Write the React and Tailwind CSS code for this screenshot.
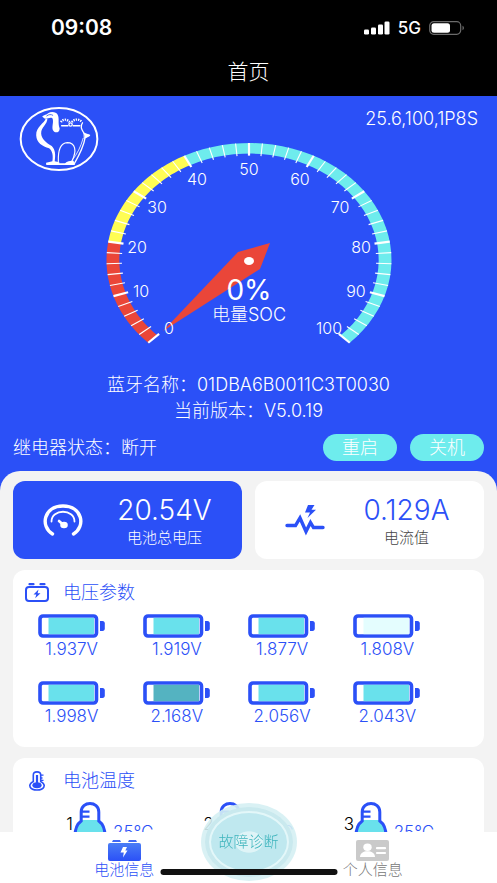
import React from "react";
import clsx from "clsx";

const CELLS = [
  { voltage: "1.937V", fill: "#69e1ec" },
  { voltage: "1.919V", fill: "#69e1ec" },
  { voltage: "1.877V", fill: "#69e1ec" },
  { voltage: "1.808V", fill: "#e4fdfe" },
  { voltage: "1.998V", fill: "#69e1ec" },
  { voltage: "2.168V", fill: "#54b3c1" },
  { voltage: "2.056V", fill: "#69e1ec" },
  { voltage: "2.043V", fill: "#69e1ec" },
];

const TEMPERATURES = [
  { id: 1, value: "25℃" },
  { id: 2, value: "25℃" },
  { id: 3, value: "25℃" },
];

// Gauge geometry: 0 sits at 225deg and 100 at -45deg
const CX = 150;
const CY = 120;
const RX = 142.5;
const RY = 117;

const pointAt = (value, k) => {
  const angle = ((225 - value * 2.7) * Math.PI) / 180;
  return [CX + RX * k * Math.cos(angle), CY - RY * k * Math.sin(angle)];
};

const bandPath = (from, to) => {
  const steps = 40;
  const outer = [];
  const inner = [];
  for (let i = 0; i <= steps; i++) {
    const v = from + ((to - from) * i) / steps;
    outer.push(pointAt(v, 1).join(","));
    inner.unshift(pointAt(v, 0.91).join(","));
  }
  return `M${outer.join("L")}L${inner.join("L")}Z`;
};

const GAUGE_LABELS = [
  [0, 70, 188],
  [10, 42, 151],
  [20, 38, 107],
  [30, 58, 67],
  [40, 98, 39],
  [50, 150, 29],
  [60, 201, 39],
  [70, 241, 67],
  [80, 262, 107],
  [90, 257, 151],
  [100, 230, 188],
];

const Gauge = () => (
  <svg
    viewBox="0 0 300 212"
    className="w-[300px] h-[212px] -mt-8 mx-auto"
    fill="#fff"
    textAnchor="middle"
    role="img"
    aria-label="电量SOC"
  >
    <path d={bandPath(0, 20)} fill="#ea4639" />
    <path d={bandPath(20, 40)} fill="#fffd54" />
    <path d={bandPath(40, 100)} fill="#6eeced" />
    {Array.from({ length: 51 }, (_, i) => {
      const [x1, y1] = pointAt(i * 2, 1);
      const [x2, y2] = pointAt(i * 2, 0.892);
      return (
        <line
          key={i}
          x1={x1}
          y1={y1}
          x2={x2}
          y2={y2}
          stroke="#fff"
          strokeWidth={i % 5 === 0 ? 2.2 : 1.1}
        />
      );
    })}
    <path d="M64 191L139 112L171 103L161 129Z" fill="#ea4639" />
    <ellipse cx="150" cy="121" rx="5" ry="4" />
    {GAUGE_LABELS.map(([label, x, y]) => (
      <text key={label} x={x} y={y + 6} fontSize="16">
        {label}
      </text>
    ))}
    <text x="150" y="160" fontSize="28" className="font-normal">
      0%
    </text>
    <text x="150" y="181" fontSize="18">
      电量SOC
    </text>
  </svg>
);

const CamelLogo = () => (
  <svg
    viewBox="26 16 242 198"
    className="w-[80px] h-[66px]"
    fill="none"
    stroke="#fff"
    strokeLinecap="round"
    strokeLinejoin="round"
    role="img"
    aria-label="logo"
  >
    <ellipse cx="147" cy="115" rx="116" ry="94" strokeWidth="6" />
    {/* head and ear */}
    <path
      d="M96 47C102 41 110 42 114 37C124 31 139 33 143 42C149 54 143 66 149 83C149 98 132 98 128 87C125 74 132 63 127 52C119 48 112 55 103 53Z"
      fill="#fff"
      stroke="none"
    />
    <path d="M110 45C116 40 123 40 128 43" stroke="#2b50f7" strokeWidth="2.5" />
    {/* chest and front leg */}
    <path
      d="M107 53C103 67 77 78 78 104C79 127 97 138 117 143C127 150 130 166 127 182L108 187V193H148V185L134 182C137 162 136 147 125 136C108 126 94 114 93 98C93 79 111 72 112 54Z"
      fill="#fff"
      stroke="none"
    />
    <path
      d="M145 183C144 150 150 127 172 126C197 126 201 151 187 180"
      strokeWidth="3.5"
    />
    {/* saddle */}
    <path d="M155 75H174M190 75H210" strokeWidth="4" />
    <path d="M153 64C158 54 171 54 179 64" strokeWidth="7" strokeDasharray="4 3" strokeLinecap="butt" />
    <path d="M186 64C193 54 207 54 215 62" strokeWidth="7" strokeDasharray="4 3" strokeLinecap="butt" />
    <circle cx="182" cy="71" r="5" fill="#2b50f7" strokeWidth="4" />
    {/* back, tail and rear leg */}
    <path
      d="M218 66C209 78 217 88 224 100L239 104L226 111C221 142 207 166 193 190"
      strokeWidth="4"
    />
    <path d="M223 97L241 104L224 113Z" fill="#fff" strokeWidth="2" />
    <path d="M220 113C212 140 203 159 187 179" strokeWidth="2.5" />
    <path d="M164 194C165 184 176 181 191 181L195 194Z" fill="#fff" stroke="none" />
    <path d="M112 191H190" strokeWidth="6" />
  </svg>
);

const StatusBar = () => (
  <div className="h-12 pt-2 pl-[51px] pr-8 flex items-center justify-between">
    <span className="text-[21px] leading-6 font-semibold">09:08</span>
    <div className="flex items-center gap-2">
      <svg viewBox="0 0 26 14" className="w-[26px] h-[14px]" fill="#fff">
        <rect x="0" y="8.5" width="5" height="5" rx="1.3" />
        <rect x="7" y="6.5" width="5" height="7" rx="1.3" />
        <rect x="14" y="3.5" width="5" height="10" rx="1.3" />
        <rect x="20.5" y="0.5" width="5" height="13" rx="1.3" />
      </svg>
      <span className="text-[17px] leading-6 font-medium">5G</span>
      <svg viewBox="0 0 36 14" className="w-9 h-[14px]">
        <rect x="0.7" y="0.7" width="31" height="12.6" rx="4" fill="none" stroke="#6b6b6b" strokeWidth="1.2" />
        <rect x="2.5" y="2.3" width="18.5" height="9.4" rx="2.5" fill="#fff" />
        <path d="M33.5 4.8C35.4 5.5 35.4 8.5 33.5 9.2Z" fill="#6b6b6b" />
      </svg>
    </div>
  </div>
);

const GaugeIcon = () => (
  <svg viewBox="0 0 40 32" className="w-10 h-8" fill="none" stroke="#fff" strokeLinecap="round">
    <path d="M9.5 30C-3 22.5 0.5 2 20 2C39.5 2 43 22.5 30.5 30" strokeWidth="3.4" />
    <path d="M8.5 17.5C8.5 4.5 31.5 4.5 31.5 17.5" strokeWidth="1.8" />
    <path d="M16 17L20 20.5" strokeWidth="2.6" />
    <ellipse cx="21" cy="21" rx="3.8" ry="3.3" fill="#fff" stroke="none" />
  </svg>
);

const CurrentIcon = () => (
  <svg viewBox="0 0 40 32" className="w-10 h-8" fill="none">
    <path
      d="M2 21.5H10.5L15 14L21 27.5L25.5 18.5L28.5 23.5H38"
      stroke="#2b50f7"
      strokeWidth="3.4"
      strokeLinecap="round"
    />
    <path d="M23 1H29.5L26.5 5.8H31L22.5 14L25 8.5H20Z" fill="#2b50f7" />
  </svg>
);

const BatteryIcon = () => (
  <svg viewBox="0 0 24 20" className="w-6 h-5" fill="none">
    <rect x="1" y="4" width="22" height="14" rx="3" stroke="#2b50f7" strokeWidth="2" />
    <path d="M4.5 1.2H8.5M15.5 1.2H19.5" stroke="#2b50f7" strokeWidth="2.2" strokeLinecap="round" />
    <path d="M13.5 6.5L8.5 11.5H11.3L10.2 15.3L15.5 10.2H12.6Z" fill="#2b50f7" />
  </svg>
);

const TemperatureIcon = () => (
  <svg viewBox="0 0 24 20" className="w-6 h-5" fill="none" stroke="#2b50f7">
    <path
      d="M8.3 10.5V4C8.3 -0.2 15.7 -0.2 15.7 4V10.5C22 14 19 19 12 19C5 19 2 14 8.3 10.5Z"
      strokeWidth="1.6"
    />
    <ellipse cx="12" cy="14.3" rx="4.6" ry="3" fill="#2b50f7" stroke="none" />
    <path d="M12 4V14" strokeWidth="2.2" />
    <path d="M16 4.2H18.5M16 7H17.5M16 9.4H18.5" strokeWidth="1.3" />
  </svg>
);

const StatCard = ({ icon, value, label, active }) => (
  <div
    className={clsx(
      "h-[78px] rounded-xl flex items-center pl-[30px] pr-3",
      active ? "bg-[#2b50f7] text-white" : "bg-white text-[#2b50f7]"
    )}
  >
    {icon}
    <div className="flex-1 flex flex-col items-center pl-4 pt-1">
      <span className="text-[28px] leading-8">{value}</span>
      <span className={clsx("text-[15px] leading-6", !active && "text-[#444]")}>
        {label}
      </span>
    </div>
  </div>
);

const SectionTitle = ({ icon, children }) => (
  <div className="flex items-center gap-[14px] px-3 text-[#2b50f7]">
    {icon}
    <h2 className="text-[18px] leading-6 font-light">{children}</h2>
  </div>
);

const Cell = ({ voltage, fill }) => (
  <div className="flex flex-col items-center text-[#2b50f7]">
    <svg viewBox="0 0 68 24" className="w-[68px] h-6">
      <rect x="2" y="2" width="56.5" height="20" rx="3" fill="#fff" stroke="#2b50f7" strokeWidth="3.6" />
      <rect x="10.5" y="3.8" width="45.5" height="16.4" fill={fill} />
      <path d="M62 7H64.5C66 7 66.8 8 66.8 9.5V14.5C66.8 16 66 17 64.5 17H62Z" fill="#2b50f7" />
    </svg>
    <span className="text-[17px] leading-[22px]">{voltage}</span>
  </div>
);

const Thermometer = () => (
  <svg viewBox="0 0 34 54" className="w-[34px] h-[54px]" fill="none">
    <path d="M9 18H25C26 20 32 24 32 34C32 45 26 52 17 52C8 52 2 45 2 34C2 24 8 20 9 18Z" fill="#69e1ec" />
    <path
      d="M8.2 19V10C8.2 -1.2 25.8 -1.2 25.8 10V19C30 22 32 28 32 34C32 45 26 52 17 52C8 52 2 45 2 34C2 28 4 22 8.2 19Z"
      stroke="#2b50f7"
      strokeWidth="3"
    />
    <path d="M9 9.7H16.5M9 14.7H16.5" stroke="#2b50f7" strokeWidth="2.2" />
  </svg>
);

const TabBar = () => (
  <nav className="relative shrink-0 h-[51px] bg-white grid grid-cols-2 text-[15px] leading-[18px]">
    <a href="#battery" className="flex flex-col items-center pt-2 text-[#2b50f7]">
      <svg viewBox="0 0 33 21" className="w-[33px] h-[21px]">
        <defs>
          <linearGradient id="tabBattery" x1="0" y1="0" x2="0" y2="1">
            <stop offset="0" stopColor="#4a7df5" />
            <stop offset="1" stopColor="#2b50f7" />
          </linearGradient>
        </defs>
        <path d="M5 0H12L13 2H4ZM21 0H28L29 2H20Z" fill="#3f68f6" />
        <rect y="3" width="33" height="18" rx="2" fill="url(#tabBattery)" />
        <path d="M15 7H19L17.3 10.5H19.5L15 17.5L15.8 12.5H12.5Z" fill="#fff" />
      </svg>
      <span>电池信息</span>
    </a>
    <a href="#profile" className="flex flex-col items-center pt-2 text-[#777]">
      <svg viewBox="0 0 33 21" className="w-[33px] h-[21px]">
        <rect width="33" height="21" rx="2" fill="#cacaca" />
        <ellipse cx="11.5" cy="7.2" rx="4.2" ry="3.7" fill="#fff" />
        <path d="M4 17C4 13 7.5 11.2 11.5 11.2C15.5 11.2 19 13 19 17Z" fill="#fff" />
        <path d="M21 8.2H29M21 13H29" stroke="#fff" strokeWidth="2.2" strokeLinecap="round" />
      </svg>
      <span>个人信息</span>
    </a>
    <button className="absolute left-1/2 -translate-x-1/2 -top-[29px] w-24 h-[78px] rounded-[50%] bg-[#d5eff3]/90 p-1">
      <span className="flex w-full h-full p-1 rounded-[50%] bg-[#c9e9ee]">
        <span className="flex w-full h-full items-center justify-center rounded-[50%] border-2 border-[#e3f7f9] bg-[radial-gradient(ellipse_at_center,#dff4f7_0_25%,#bfe8ef_27%)] text-[#3fb5bd] whitespace-nowrap">
          故障诊断
        </span>
      </span>
    </button>
    <div className="absolute left-1/2 -translate-x-1/2 bottom-2 w-[177px] h-[6px] rounded-full bg-[#111]" />
  </nav>
);

const App = () => {
  return (
    <div className="h-screen flex flex-col overflow-hidden bg-[#f3f3f3] font-light font-['Inter','Noto_Sans_CJK_SC',sans-serif]">
      <header className="shrink-0 bg-black text-white">
        <StatusBar />
        <h1 className="h-12 text-[21px] leading-[48px] text-center font-light">首页</h1>
      </header>

      <main className="flex-1 min-h-0 overflow-y-auto [scrollbar-width:none] bg-[#2b50f7]">
        <section className="text-white">
          <div className="flex items-start justify-between pl-[19px] pr-[19px] pt-[10px]">
            <CamelLogo />
            <span className="text-[18px] leading-[26px]">25.6,100,1P8S</span>
          </div>
          <Gauge />
          <div className="pt-5 text-center text-[18px] leading-[26px]">
            <p>蓝牙名称：01DBA6B0011C3T0030</p>
            <p>当前版本：V5.0.19</p>
          </div>
          <div className="flex items-center gap-[13px] px-[13px] py-[10px] text-[18px] leading-[27px]">
            <span className="flex-1">继电器状态：断开</span>
            <button className="w-[74px] h-[27px] rounded-full bg-[#6eeced]">重启</button>
            <button className="w-[74px] h-[27px] rounded-full bg-[#6eeced]">关机</button>
          </div>
        </section>

        <div className="rounded-t-[20px] bg-[#f3f3f3] px-[13px] pt-[10px] pb-10 flex flex-col gap-[11px]">
          <div className="grid grid-cols-2 gap-[13px]">
            <StatCard icon={<GaugeIcon />} value="20.54V" label="电池总电压" active />
            <StatCard icon={<CurrentIcon />} value="0.129A" label="电流值" />
          </div>

          <section className="rounded-xl bg-white pt-[11px] pb-5">
            <SectionTitle icon={<BatteryIcon />}>电压参数</SectionTitle>
            <div className="grid grid-cols-4 gap-y-[21px] pt-[9px] pl-[6px] pr-11">
              {CELLS.map((cell) => (
                <Cell key={cell.voltage} {...cell} />
              ))}
            </div>
          </section>

          <section className="rounded-xl bg-white pt-[11px] pb-5">
            <SectionTitle icon={<TemperatureIcon />}>电池温度</SectionTitle>
            <div className="grid grid-cols-3 pt-[9px] pl-[50px]">
              {TEMPERATURES.map(({ id, value }) => (
                <div key={id} className="flex items-start text-[17px] leading-6">
                  <span className="w-[10px] pt-[10px] text-right text-black">{id}</span>
                  <Thermometer />
                  <span className="pl-[6px] pt-[18px] text-[#2b50f7]">{value}</span>
                </div>
              ))}
            </div>
          </section>
        </div>
      </main>

      <TabBar />
    </div>
  );
};

export default App;
